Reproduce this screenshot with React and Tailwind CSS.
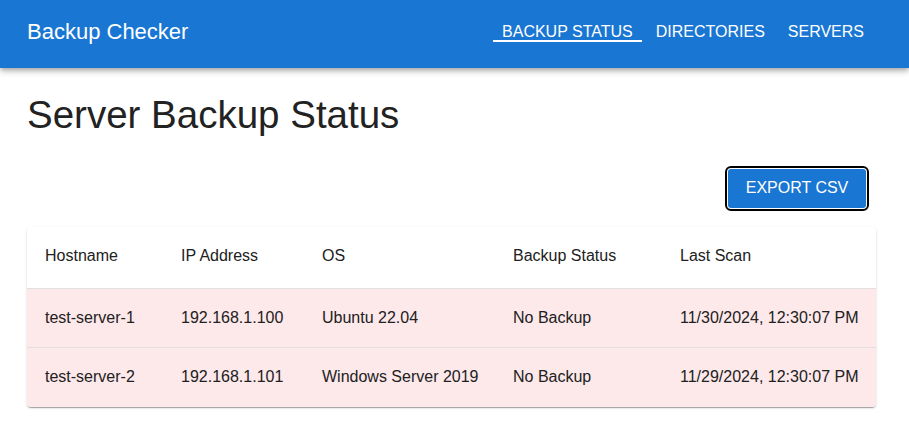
export default function App() {
  const rows = [
    ["test-server-1", "192.168.1.100", "Ubuntu 22.04", "No Backup", "11/30/2024, 12:30:07 PM"],
    ["test-server-2", "192.168.1.101", "Windows Server 2019", "No Backup", "11/29/2024, 12:30:07 PM"],
  ];
  return (
    <div className="min-h-[440px] bg-white font-['Liberation_Sans',Arial,sans-serif] text-[#212121]">
      <header className="h-[68px] bg-[#1976d2] flex items-start justify-between pl-[27px] pr-[36px] shadow-[0_2px_4px_-1px_rgba(0,0,0,0.2),0_4px_5px_0_rgba(0,0,0,0.14),0_1px_10px_0_rgba(0,0,0,0.12)] text-white">
        <div className="mt-[21px] text-[22px] leading-none">Backup Checker</div>
        <nav className="mt-[24px] flex items-start gap-[5px] text-[16px] leading-none uppercase">
          <span className="relative px-[9px]">
            Backup Status
            <span className="absolute left-0 right-0 top-[16px] h-[2px] bg-white" />
          </span>
          <span className="px-[9px]">Directories</span>
          <span className="px-[9px]">Servers</span>
        </nav>
      </header>
      <main className="pl-[27px] pr-[33px]">
        <h1 className="mt-[28px] text-[38.5px] leading-none text-[#222]">Server Backup Status</h1>
        <div className="flex justify-end mt-[31px] mr-[7px]">
          <button className="h-[45px] w-[144px] rounded-[6px] border-[2px] border-black bg-white p-[1px]">
            <span className="flex h-full w-full items-center justify-center rounded-[3px] bg-[#1976d2] text-white text-[16px]">EXPORT CSV</span>
          </button>
        </div>
        <div className="mt-[16px] rounded-[4px] bg-white shadow-[0_2px_1px_-1px_rgba(0,0,0,0.2),0_1px_1px_0_rgba(0,0,0,0.14),0_1px_3px_0_rgba(0,0,0,0.12)] overflow-hidden text-[16px]">
          <div className="grid grid-cols-[136px_141px_191px_167px_1fr] h-[62px] items-center pl-[18px] pb-[3px] border-b border-[#e0e0e0]">
            <div>Hostname</div>
            <div>IP Address</div>
            <div>OS</div>
            <div>Backup Status</div>
            <div>Last Scan</div>
          </div>
          {rows.map((r, i) => (
            <div key={i} className={`grid grid-cols-[136px_141px_191px_167px_1fr] h-[59px] items-center pl-[18px] bg-[#fde8ea] ${i === 0 ? "border-b border-[#e0e0e0]" : ""}`}>
              {r.map((c, j) => (
                <div key={j} className="whitespace-nowrap">{c}</div>
              ))}
            </div>
          ))}
        </div>
      </main>
    </div>
  );
}
